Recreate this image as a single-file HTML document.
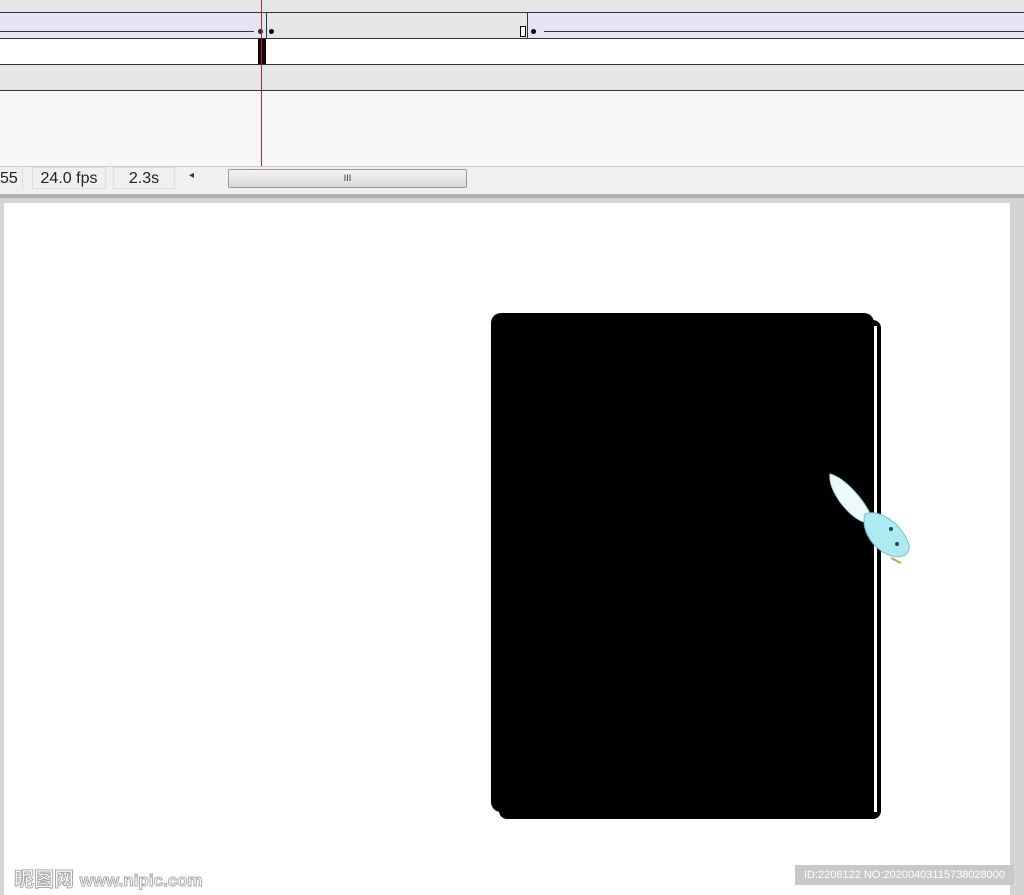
<!DOCTYPE html>
<html><head><style>
body{margin:0;width:1024px;height:895px;overflow:hidden;background:#d4d4d4;font-family:"Liberation Sans",sans-serif;position:relative}
div{position:absolute;box-sizing:border-box;white-space:nowrap}
.hatch{background:#e6e6e6}
</style></head><body>
<div class="hatch" style="left:0;top:0;width:1024px;height:12px"></div>
<div style="left:0;top:12px;width:1024px;height:27px;background:#e4e4f2;border-top:1px solid #333;border-bottom:1px solid #333"></div>
<div class="hatch" style="left:266px;top:13px;width:262px;height:25px;border-left:1px solid #333;border-right:1px solid #333"></div>
<div style="left:0;top:31px;width:254px;height:1px;background:#333"></div>
<div style="left:544px;top:31px;width:480px;height:1px;background:#333"></div>
<div style="left:258px;top:29px;width:5px;height:5px;border-radius:50%;background:#222"></div>
<div style="left:269px;top:29px;width:5px;height:5px;border-radius:50%;background:#000"></div>
<div style="left:520px;top:26px;width:6px;height:11px;border:1px solid #000;background:#fff"></div>
<div style="left:531px;top:29px;width:5px;height:5px;border-radius:50%;background:#000"></div>
<div style="left:0;top:39px;width:1024px;height:26px;background:#fff;border-bottom:1px solid #333"></div>
<div style="left:258px;top:39px;width:8px;height:25px;background:#1a0505"></div>
<div class="hatch" style="left:0;top:65px;width:1024px;height:26px;border-bottom:1px solid #333"></div>
<div style="left:0;top:91px;width:1024px;height:75px;background:#f7f7f7"></div>
<div style="left:0;top:166px;width:1024px;height:28px;background:#f0f0f0;border-top:1px solid #ccc"></div>
<div style="left:0;top:167px;width:23px;height:22px;background:#f0f0f0;border-right:1px solid #ddd;font-size:16px;line-height:24px;color:#222">55</div>
<div style="left:32px;top:167px;width:74px;height:22px;border:1px solid #ddd;font-size:16px;line-height:22px;color:#222;text-align:center">24.0 fps</div>
<div style="left:113px;top:167px;width:62px;height:22px;border:1px solid #ddd;font-size:16px;line-height:22px;color:#222;text-align:center">2.3s</div>
<div style="left:189px;top:170px;font-size:10px;color:#333">◂</div>
<div style="left:228px;top:169px;width:239px;height:19px;border:1px solid #999;border-radius:2px;background:linear-gradient(#f4f4f4,#d8d8d8);font-size:9px;text-align:center;line-height:17px;color:#333">III</div>
<div style="left:261px;top:0;width:1px;height:166px;background:#a03030"></div>
<div style="left:0;top:194px;width:1024px;height:4px;background:#b0b0b0"></div>
<div style="left:4px;top:203px;width:1006px;height:692px;background:#fff"></div>
<div style="left:499px;top:320px;width:382px;height:499px;background:#000;border-radius:8px"></div>
<div style="left:874px;top:326px;width:3px;height:486px;background:#fff"></div>
<div style="left:491px;top:313px;width:383px;height:499px;background:#000;border-radius:10px"></div>
<svg style="position:absolute;left:825px;top:470px" width="90" height="100">
<path d="M5 4 C20 8 40 30 48 50 C40 58 25 45 15 32 C8 22 4 12 5 4Z" fill="#eef9fb" stroke="#9cd6df"/>
<path d="M40 44 C55 38 78 55 84 75 C86 88 70 90 58 82 C45 74 36 58 40 44Z" fill="#aeeaf2" stroke="#6cc4d4"/>
<circle cx="66" cy="59" r="2" fill="#246"/><circle cx="72" cy="74" r="2" fill="#246"/>
<path d="M66 88 L76 93 L70 90Z" fill="#c9a040" stroke="#c9a040" stroke-width="2"/>
</svg>
<div style="left:795px;top:865px;width:219px;height:20px;background:#c8c8c8;color:#fff;font-size:11px;line-height:20px;text-align:center;overflow:hidden">ID:2206122 NO:20200403115738028000</div>
<div style="left:14px;top:863px;font-size:20px;color:#fff;font-family:'Liberation Sans','Noto Sans CJK SC',sans-serif;-webkit-text-stroke:1px #aaa;font-weight:bold">昵图网 <span style="font-size:17px">www.nipic.com</span></div>
</body></html>
